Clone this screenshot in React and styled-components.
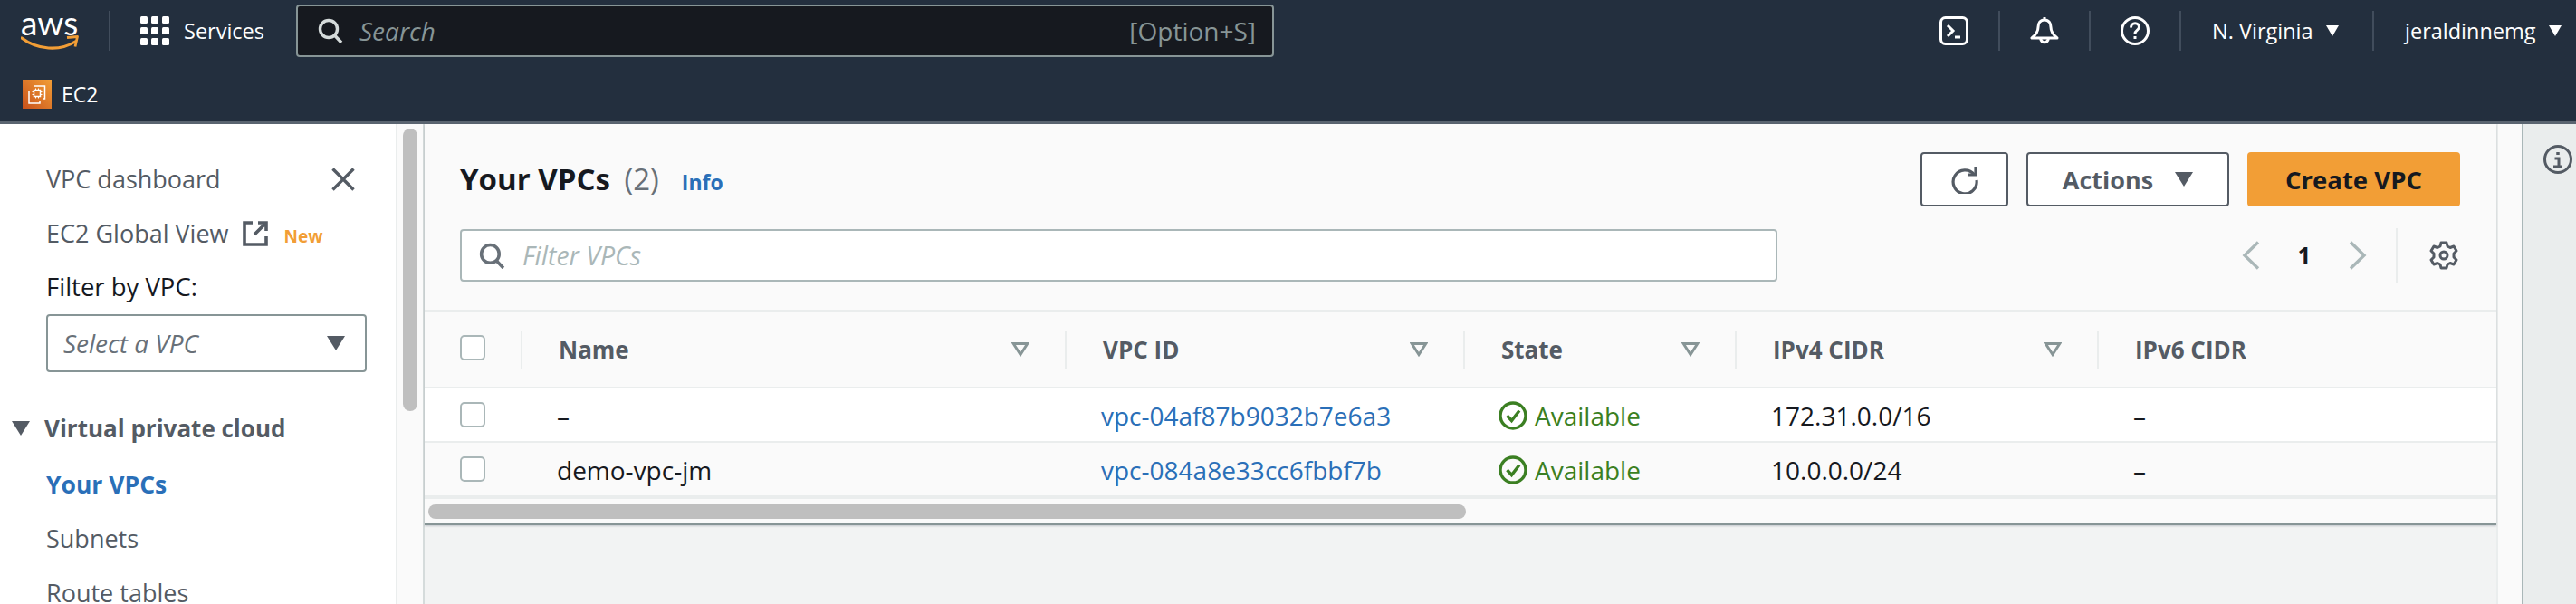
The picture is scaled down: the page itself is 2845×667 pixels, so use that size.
import styled, { createGlobalStyle } from 'styled-components'

const Global = createGlobalStyle`
  html, body { margin: 0; padding: 0; background: #f2f3f3; }
  body { font-family: "Open Sans", "Liberation Sans", sans-serif; font-size: 27px; color: #16191f; overflow: hidden; }
  * { box-sizing: border-box; }
`
const Page = styled.div`
  width: 2845px;
  height: 667px;
  display: flex;
  flex-direction: column;
  overflow: hidden;
`
const Header = styled.header`
  background: #232f3e;
  height: 137px;
  border-bottom: 3px solid #5a6470;
  color: #fff;
  flex: none;
`
const PrimaryBar = styled.div`
  height: 68px;
  display: flex;
  align-items: center;
`
const SecondaryBar = styled.div`
  height: 66px;
  padding: 6px 0 0 25px;
  display: flex;
  align-items: center;
  gap: 11px;
  font-size: 23px;
`
const Logo = styled.div`
  width: 120px;
  height: 44px;
  padding-left: 23px;
  flex: none;
`
const LogoText = styled.span`
  display: block;
  font-family: "Lato", sans-serif;
  font-size: 37px;
  line-height: 22px;
  padding-top: 2px;
`
const Smile = styled.svg`
  display: block;
  width: 64px;
  height: 18px;
  margin-top: 3px;
`
const NavDivider = styled.div`
  width: 2px;
  height: 44px;
  background: #414d5c;
  flex: none;
`
const ServicesLink = styled.div`
  display: flex;
  align-items: center;
  gap: 16px;
  width: 205px;
  padding-left: 33px;
  font-size: 23.500px;
  flex: none;
`
const Search = styled.div`
  width: 1080px;
  height: 58px;
  background: #16191f;
  border: 2px solid #879596;
  border-radius: 4px;
  display: flex;
  align-items: center;
  padding: 0 18px 0 22px;
  gap: 18px;
  color: #879596;
  font-size: 28px;
`
const SearchHint = styled.span`
  font-style: italic;
  flex: 1;
`
const Shortcut = styled.span`
  font-size: 28px;
`
const NavRight = styled.div`
  margin-left: auto;
  display: flex;
  align-items: center;
`
const NavIconCell = styled.div`
  width: 100px;
  height: 44px;
  display: flex;
  align-items: center;
  justify-content: center;
  border-left: 2px solid ${p => (p.$first ? 'transparent' : '#414d5c')};
`
const NavMenu = styled.div`
  height: 44px;
  width: ${p => p.$width}px;
  padding-left: 34px;
  border-left: 2px solid #414d5c;
  display: flex;
  align-items: center;
  gap: 14px;
  font-size: 23.500px;
`
const Caret = styled.i`
  display: block;
  flex: none;
  width: 0;
  height: 0;
  border-left: ${p => p.$w / 2}px solid transparent;
  border-right: ${p => p.$w / 2}px solid transparent;
  border-top: ${p => p.$h}px solid ${p => p.$color};
`
const Body = styled.div`
  flex: 1;
  display: flex;
  min-height: 0;
`
const Sidebar = styled.nav`
  width: 437px;
  flex: none;
  background: #fff;
  padding: 31px 45px 0 51px;
  overflow: hidden;
  color: #545b64;
`
const NavItem = styled.div`
  height: 60px;
  line-height: 24px;
  display: flex;
  align-items: center;
  justify-content: ${p => (p.$spread ? 'space-between' : 'flex-start')};
  color: ${p => (p.$active ? '#2a6fb8' : '#545b64')};
  font-weight: ${p => (p.$active ? 700 : 400)};
  font-size: ${p => (p.$active ? 26.5 : 27)}px;
`
const NewTag = styled.span`
  color: #f29e36;
  font-size: 19px;
  font-weight: 700;
  margin: 6px 0 0 18px;
`
const FilterLabel = styled.div`
  height: 58px;
  line-height: 58px;
  color: #16191f;
  font-size: 27.500px;
`
const SelectBox = styled.div`
  width: 354px;
  height: 64px;
  margin: 1px 0 32px;
  background: #fff;
  border: 2px solid #879596;
  border-radius: 4px;
  padding: 0 22px 0 17px;
  display: flex;
  align-items: center;
  justify-content: space-between;
  font-style: italic;
  font-size: 28px;
  color: #687078;
`
const SectionTitle = styled.div`
  height: 60px;
  margin: 0 0 2px -38px;
  display: flex;
  align-items: center;
  gap: 16px;
  font-weight: 700;
  font-size: 26px;
`
const ScrollTrack = styled.div`
  width: 30px;
  flex: none;
  background: #fafafa;
  border-left: 2px solid #eaeded;
  padding: 5px 6px 0;
`
const ScrollThumb = styled.div`
  width: 16px;
  height: 312px;
  border-radius: 8px;
  background: #bfbfbf;
`
const Main = styled.main`
  flex: 1;
  min-width: 0;
  background: #f2f3f3;
  border-left: 2px solid #d5dbdb;
  border-right: 2px solid #eaeded;
`
const Card = styled.section`
  background: #fafafa;
  border-bottom: 2px solid #879596;
  box-shadow: 0 1px 2px rgba(0, 22, 43, 0.2);
`
const CardHeader = styled.div`
  height: 207px;
  padding: 31px 40px 0 39px;
  border-bottom: 2px solid #eaeded;
`
const TitleRow = styled.div`
  height: 60px;
  display: flex;
  align-items: center;
`
const Title = styled.h1`
  margin: 0;
  font-size: 33px;
  font-weight: 700;
  color: #16191f;
  line-height: 60px;
`
const Count = styled.span`
  font-weight: 400;
  color: #687078;
  margin-left: 7px;
`
const InfoLink = styled.a`
  color: #2a6fb8;
  font-size: 23px;
  font-weight: 700;
  margin: 6px 0 0 25px;
`
const Actions = styled.div`
  margin-left: auto;
  display: flex;
  gap: 20px;
`
const OutlineButton = styled.button`
  width: ${p => p.$width}px;
  height: 60px;
  padding: 0;
  background: #fff;
  border: 2px solid #545b64;
  border-radius: 4px;
  color: #545b64;
  font: 700 27px "Open Sans", sans-serif;
  display: flex;
  align-items: center;
  justify-content: center;
  gap: 24px;
`
const PrimaryButton = styled.button`
  width: 235px;
  height: 60px;
  padding: 0;
  background: #f29e36;
  border: none;
  border-radius: 4px;
  color: #16191f;
  font: 700 27.5px "Open Sans", sans-serif;
`
const ToolRow = styled.div`
  margin-top: 24px;
  display: flex;
  align-items: center;
`
const FilterInput = styled.div`
  width: 1455px;
  height: 58px;
  background: #fff;
  border: 2px solid #aab7b8;
  border-radius: 4px;
  padding-left: 19px;
  display: flex;
  align-items: center;
  gap: 19px;
  font-style: italic;
  font-size: 28.500px;
  color: #aab7b8;
`
const Pager = styled.div`
  margin-left: auto;
  display: flex;
  align-items: center;
`
const PageNumber = styled.span`
  width: 98px;
  text-align: center;
  font-weight: 700;
  font-size: 26px;
`
const Settings = styled.div`
  height: 60px;
  margin-left: 32px;
  padding: 0 2px 0 35px;
  border-left: 2px solid #eaeded;
  display: flex;
  align-items: center;
`
const columns = '106px 601px 440px 300px 400px 1fr'
const HeadRow = styled.div`
  height: 85px;
  display: grid;
  grid-template-columns: ${columns};
  align-items: center;
  border-bottom: 2px solid #eaeded;
`
const HeadCell = styled.div`
  height: 42px;
  padding: 0 39px 0 40px;
  border-left: 2px solid #eaeded;
  display: flex;
  align-items: center;
  justify-content: space-between;
  font-weight: 700;
  font-size: 26px;
  color: #545b64;
`
const CheckCell = styled.div`
  padding-left: 39px;
  margin-top: ${p => (p.$head ? -4 : 0)}px;
`
const Checkbox = styled.div`
  width: 28px;
  height: 28px;
  background: #fff;
  border: 2px solid #aab7b8;
  border-radius: 5px;
`
const Row = styled.div`
  height: ${p => p.$height}px;
  display: grid;
  grid-template-columns: ${columns};
  align-items: center;
  background: ${p => (p.$white ? '#fff' : '#fafafa')};
  border-bottom: ${p => p.$line}px solid #eaeded;
`
const Cell = styled.div`
  padding: 2px 0 0 40px;
  font-size: 28px;
  color: #16191f;
`
const VpcLink = styled.a`
  color: #2a6fb8;
`
const Status = styled.span`
  display: flex;
  align-items: center;
  gap: 8px;
  margin-left: -1px;
  color: #3b7f22;
`
const TableScroll = styled.div`
  height: 27px;
  padding: 6px 0 0 4px;
`
const TableThumb = styled.div`
  width: 1146px;
  height: 16px;
  border-radius: 8px;
  background: #bfbfbf;
`
const PageScroll = styled.div`
  width: 26px;
  flex: none;
  background: #fafafa;
`
const Tools = styled.aside`
  width: 60px;
  flex: none;
  background: #eaeded;
  border-left: 2px solid #aab7b8;
  padding: 23px 0 0 22px;
`

const GridIcon = () => (
  <svg width="32" height="32" viewBox="0 0 32 32" fill="#fff">
    {[0, 12, 24].map(y => [0, 12, 24].map(x => <rect key={`${x}-${y}`} x={x} y={y} width="8" height="8" rx="1.5" />))}
  </svg>
)
const SearchIcon = ({ color, size }) => (
  <svg width={size} height={size} viewBox="0 0 28 28" fill="none" stroke={color} strokeWidth="3.4" style={{ flex: 'none' }}>
    <circle cx="12" cy="12" r="9.5" />
    <path d="M18.5 19 26 27" />
  </svg>
)
const FilterIcon = () => (
  <svg width="20" height="16" viewBox="0 0 20 16" fill="none" stroke="#879596" strokeWidth="3" style={{ flex: 'none' }}>
    <path d="M2.2 1.5h15.6L10 13.5z" />
  </svg>
)
const CheckIcon = () => (
  <svg width="32" height="32" viewBox="0 0 32 32" fill="none" stroke="#3b7f22" strokeWidth="3.4" style={{ flex: 'none' }}>
    <circle cx="16" cy="16" r="14" />
    <path d="M9.5 16l5 5.5 8.5-11" />
  </svg>
)

const vpcs = [
  { name: '–', id: 'vpc-04af87b9032b7e6a3', cidr: '172.31.0.0/16', white: true, height: 60, line: 2 },
  { name: 'demo-vpc-jm', id: 'vpc-084a8e33cc6fbbf7b', cidr: '10.0.0.0/24', white: false, height: 62, line: 4 },
]

export default function App() {
  return (
    <Page>
      <Global />
      <Header>
        <PrimaryBar>
          <Logo>
            <LogoText>aws</LogoText>
            <Smile viewBox="0 0 64 18" fill="none">
              <path d="M1 3c17 13 42 15 59 4" stroke="#f29e36" strokeWidth="3.2" strokeLinecap="round" />
              <path d="M51 2.5l11.5-1-2.5 11" stroke="#f29e36" strokeWidth="2.8" strokeLinejoin="round" />
            </Smile>
          </Logo>
          <NavDivider />
          <ServicesLink>
            <GridIcon />
            Services
          </ServicesLink>
          <Search>
            <SearchIcon color="#d5dbdb" size={28} />
            <SearchHint>Search</SearchHint>
            <Shortcut>[Option+S]</Shortcut>
          </Search>
          <NavRight>
            <NavIconCell $first>
              <svg width="32" height="32" viewBox="0 0 32 32" fill="none" stroke="#fff" strokeWidth="3">
                <rect x="1.5" y="1.5" width="29" height="29" rx="5" />
                <path d="M9 10l6 6-6 6" />
                <path d="M17 23h6" />
              </svg>
            </NavIconCell>
            <NavIconCell>
              <svg width="32" height="32" viewBox="0 0 32 32" fill="none" stroke="#fff" strokeWidth="3">
                <path d="M16 1v3M16 4c-5 0-7 4-7 8 0 5-2 8-7 12h28c-5-4-7-7-7-12 0-4-2-8-7-8z" strokeLinejoin="round" />
                <path d="M11.5 24a4.6 6 0 0 0 9 0" />
              </svg>
            </NavIconCell>
            <NavIconCell>
              <svg width="32" height="32" viewBox="0 0 32 32" fill="none" stroke="#fff" strokeWidth="3">
                <circle cx="16" cy="16" r="14.5" />
                <path d="M11.5 12.5c0-3 2-4.8 4.6-4.8s4.4 1.700 4.400 4c0 3.6-4.500 3.800-4.500 7.300" />
                <path d="M16 22v3" />
              </svg>
            </NavIconCell>
            <NavMenu $width={213}>
              N. Virginia
              <Caret $w={15} $h={12} $color="#fff" />
            </NavMenu>
            <NavMenu $width={225}>
              jeraldinnemg
              <Caret $w={15} $h={12} $color="#fff" />
            </NavMenu>
          </NavRight>
        </PrimaryBar>
        <SecondaryBar>
          <svg width="32" height="32" viewBox="0 0 32 32" fill="none">
            <defs>
              <linearGradient id="ec2" x1="0" y1="1" x2="1" y2="0">
                <stop offset="0" stopColor="#c8511b" />
                <stop offset="1" stopColor="#f29e36" />
              </linearGradient>
            </defs>
            <rect width="32" height="32" fill="url(#ec2)" />
            <path d="M12.5 7h12v14h-2M7 13v13h12v-3" stroke="#fff" strokeWidth="1.5" />
            <rect x="12.5" y="11.500" width="7" height="7" stroke="#fff" strokeWidth="1.5" />
            <path d="M14.500 9.500v2M17.500 9.500v2M14.500 18.500v2M17.500 18.500v2M10.500 13.500h2M10.500 16.500h2M19.500 13.500h2M19.500 16.500h2" stroke="#fff" strokeWidth="1" />
          </svg>
          EC2
        </SecondaryBar>
      </Header>
      <Body>
        <Sidebar>
          <NavItem $spread>
            VPC dashboard
            <svg width="26" height="26" viewBox="0 0 26 26" stroke="#545b64" strokeWidth="3.4">
              <path d="M1.500 1.500l23 23M24.500 1.500l-23 23" />
            </svg>
          </NavItem>
          <NavItem>
            EC2 Global View
            <svg width="28" height="28" viewBox="0 0 28 28" fill="none" stroke="#545b64" strokeWidth="3.6" style={{ marginLeft: 15 }}>
              <path d="M11 2H2v24h24v-9" />
              <path d="M13 15 26 2M17 2h9v9" />
            </svg>
            <NewTag>New</NewTag>
          </NavItem>
          <FilterLabel>Filter by VPC:</FilterLabel>
          <SelectBox>
            Select a VPC
            <Caret $w={20} $h={16} $color="#545b64" />
          </SelectBox>
          <SectionTitle>
            <Caret $w={20} $h={16} $color="#545b64" />
            Virtual private cloud
          </SectionTitle>
          <NavItem $active>Your VPCs</NavItem>
          <NavItem>Subnets</NavItem>
          <NavItem>Route tables</NavItem>
        </Sidebar>
        <ScrollTrack>
          <ScrollThumb />
        </ScrollTrack>
        <Main>
          <Card>
            <CardHeader>
              <TitleRow>
                <Title>
                  Your VPCs <Count>(2)</Count>
                </Title>
                <InfoLink>Info</InfoLink>
                <Actions>
                  <OutlineButton $width={97}>
                    <svg width="32" height="32" viewBox="0 0 32 32" fill="none" stroke="#545b64" strokeWidth="3.2">
                      <path d="M26.500 11A13 13 0 1 0 29 17" />
                      <path d="M19 11h9V2" />
                    </svg>
                  </OutlineButton>
                  <OutlineButton $width={224}>
                    Actions
                    <Caret $w={20} $h={16} $color="#545b64" />
                  </OutlineButton>
                  <PrimaryButton>Create VPC</PrimaryButton>
                </Actions>
              </TitleRow>
              <ToolRow>
                <FilterInput>
                  <SearchIcon color="#687078" size={29} />
                  Filter VPCs
                </FilterInput>
                <Pager>
                  <svg width="20" height="32" viewBox="0 0 20 32" fill="none" stroke="#aab7b8" strokeWidth="3.4">
                    <path d="M18 1.500 3 16l15 14.500" />
                  </svg>
                  <PageNumber>1</PageNumber>
                  <svg width="20" height="32" viewBox="0 0 20 32" fill="none" stroke="#aab7b8" strokeWidth="3.4">
                    <path d="M2 1.500 17 16 2 30.500" />
                  </svg>
                  <Settings>
                    <svg width="32" height="32" viewBox="0 0 32 32" fill="none" stroke="#545b64" strokeWidth="3">
                      <circle cx="16" cy="16" r="4" />
                      <path d="M13 2h6l1 4 3 1.500 4-1.500 3 5-3 3v4l3 3-3 5-4-1.500-3 1.500-1 4h-6l-1-4-3-1.500-4 1.500-3-5 3-3v-4l-3-3 3-5 4 1.500 3-1.500z" strokeLinejoin="round" />
                    </svg>
                  </Settings>
                </Pager>
              </ToolRow>
            </CardHeader>
            <HeadRow>
              <CheckCell $head>
                <Checkbox />
              </CheckCell>
              <HeadCell>
                Name
                <FilterIcon />
              </HeadCell>
              <HeadCell>
                VPC ID
                <FilterIcon />
              </HeadCell>
              <HeadCell>
                State
                <FilterIcon />
              </HeadCell>
              <HeadCell>
                IPv4 CIDR
                <FilterIcon />
              </HeadCell>
              <HeadCell>IPv6 CIDR</HeadCell>
            </HeadRow>
            {vpcs.map(vpc => (
              <Row key={vpc.id} $white={vpc.white} $height={vpc.height} $line={vpc.line}>
                <CheckCell>
                  <Checkbox />
                </CheckCell>
                <Cell>{vpc.name}</Cell>
                <Cell>
                  <VpcLink>{vpc.id}</VpcLink>
                </Cell>
                <Cell>
                  <Status>
                    <CheckIcon />
                    Available
                  </Status>
                </Cell>
                <Cell>{vpc.cidr}</Cell>
                <Cell>–</Cell>
              </Row>
            ))}
            <TableScroll>
              <TableThumb />
            </TableScroll>
          </Card>
        </Main>
        <PageScroll />
        <Tools>
          <svg width="32" height="32" viewBox="0 0 32 32" fill="none" stroke="#545b64" strokeWidth="3">
            <circle cx="16" cy="16" r="14.500" />
            <path d="M16 8v3" strokeWidth="3.500" />
            <path d="M12.500 15h4.500v8M11 24h10" />
          </svg>
        </Tools>
      </Body>
    </Page>
  )
}
